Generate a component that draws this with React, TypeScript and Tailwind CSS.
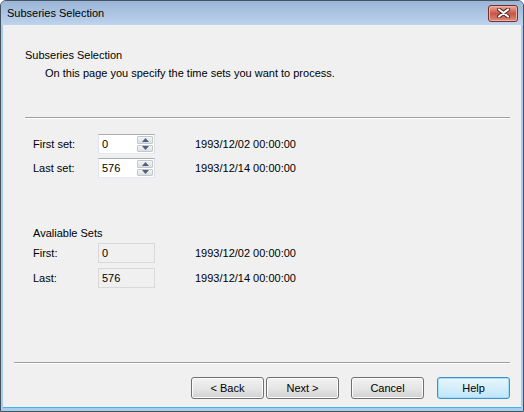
import React from "react";

const SETS = [
  { label: "First set:", value: "0", date: "1993/12/02 00:00:00" },
  { label: "Last set:", value: "576", date: "1993/12/14 00:00:00" },
];

const AVAILABLE = [
  { label: "First:", value: "0", date: "1993/12/02 00:00:00" },
  { label: "Last:", value: "576", date: "1993/12/14 00:00:00" },
];

const Arrow = ({ up }: { up?: boolean }) => (
  <svg width="7" height="4" viewBox="0 0 7 4">
    <path d={up ? "M0 4 L3.5 0 L7 4 Z" : "M0 0 L3.5 4 L7 0 Z"} fill="#4d6185" />
  </svg>
);

const SpinInput = ({ value }: { value: string }) => (
  <div className="flex h-[20px] w-[57px] border border-[#abadb3] border-b-[#e3e9ef] border-l-[#e2e3ea] border-r-[#dbdfe6] bg-white">
    <span className="flex-1 pl-[3px] leading-[18px]">{value}</span>
    <div className="flex w-[17px] flex-col gap-px py-px pr-px">
      <div className="flex flex-1 items-center justify-center rounded-[1px] border border-[#c4c7cc] bg-gradient-to-b from-[#f6f6f6] to-[#dcdde0]">
        <Arrow up />
      </div>
      <div className="flex flex-1 items-center justify-center rounded-[1px] border border-[#c4c7cc] bg-gradient-to-b from-[#f6f6f6] to-[#dcdde0]">
        <Arrow />
      </div>
    </div>
  </div>
);

const ReadOnlyBox = ({ value }: { value: string }) => (
  <div className="h-[20px] w-[57px] border border-[#d9d9d9] bg-[#f0f0f0] pl-[3px] leading-[18px]">
    {value}
  </div>
);

const Row = ({
  label,
  date,
  children,
}: {
  label: string;
  date: string;
  children: React.ReactNode;
}) => (
  <div className="flex h-[20px] items-center">
    <span className="w-[65px]">{label}</span>
    {children}
    <span className="ml-[40px]">{date}</span>
  </div>
);

const WinButton = ({
  children,
  primary,
  className = "",
}: {
  children: React.ReactNode;
  primary?: boolean;
  className?: string;
}) => (
  <button
    className={
      "h-[22px] w-[73px] rounded-[3px] border leading-[20px] " +
      (primary
        ? "border-[#3c8fd0] bg-gradient-to-b from-[#eaf6fd] via-[#d4eefb] to-[#bfe4f8] shadow-[inset_0_0_0_1px_#9fe0fb] "
        : "border-[#707070] bg-gradient-to-b from-[#f2f2f2] via-[#e6e6e6] to-[#d2d2d2] shadow-[inset_0_0_0_1px_#fcfcfc] ") +
      className
    }
  >
    {children}
  </button>
);

const CloseButton = () => (
  <div className="flex h-[17px] w-[30px] items-center justify-center rounded-[3px] border border-[#7a2d27] bg-gradient-to-b from-[#e8ab9f] via-[#c85545] to-[#d88a7a] shadow-[inset_0_0_0_1px_#eab3a8]">
    <svg width="13" height="10" viewBox="0 0 13 10">
      <path d="M2 1.5 L11 8.5 M11 1.5 L2 8.5" stroke="#4b2320" strokeWidth="4" strokeLinecap="round" />
      <path d="M2 1.5 L11 8.5 M11 1.5 L2 8.5" stroke="#ffffff" strokeWidth="2.2" strokeLinecap="round" />
    </svg>
  </div>
);

export default function App() {
  return (
    <div className="h-[412px] w-[524px] bg-white font-['Liberation_Sans',Arial,sans-serif] text-[11px] text-black">
      <div className="flex h-full flex-col overflow-hidden rounded-t-[6px] border border-[#44515f] bg-[#a9cbee]">
        <div className="flex h-[24px] shrink-0 items-center justify-between bg-gradient-to-b from-[#9ab5d6] to-[#bdd3ee] pl-[6px] pr-[5px]">
          <span className="text-[11px] leading-[14px]">Subseries Selection</span>
          <CloseButton />
        </div>
        <div className="mx-[2px] mb-[3px] flex flex-1 flex-col border-b border-b-[#3bb6e6] bg-[#f0f0f0] px-[11px] pb-[8px]">
          <div className="pl-[11px] pt-[23px] leading-[15px]">Subseries Selection</div>
          <div className="mt-[3px] pl-[31px] leading-[15px]">
            On this page you specify the time sets you want to process.
          </div>
          <div className="ml-[11px] mt-[36px] h-[2px] border-b border-t border-b-white border-t-[#a0a0a0]" />

          <div className="ml-[19px] mt-[15px] flex flex-col gap-[4px]">
            {SETS.map((s) => (
              <Row key={s.label} label={s.label} date={s.date}>
                <SpinInput value={s.value} />
              </Row>
            ))}
          </div>

          <div className="ml-[19px] mt-[48px] leading-[15px]">Avaliable Sets</div>
          <div className="ml-[19px] mt-[2px] flex flex-col gap-[5px]">
            {AVAILABLE.map((s) => (
              <Row key={s.label} label={s.label} date={s.date}>
                <ReadOnlyBox value={s.value} />
              </Row>
            ))}
          </div>

          <div className="flex-1" />
          <div className="h-[2px] border-b border-t border-b-white border-t-[#a0a0a0]" />
          <div className="mt-[13px] flex justify-end">
            <WinButton>&lt; Back</WinButton>
            <WinButton className="ml-[2px]">Next &gt;</WinButton>
            <WinButton className="ml-[12px]">Cancel</WinButton>
            <WinButton primary className="ml-[13px]">
              Help
            </WinButton>
          </div>
        </div>
      </div>
    </div>
  );
}
